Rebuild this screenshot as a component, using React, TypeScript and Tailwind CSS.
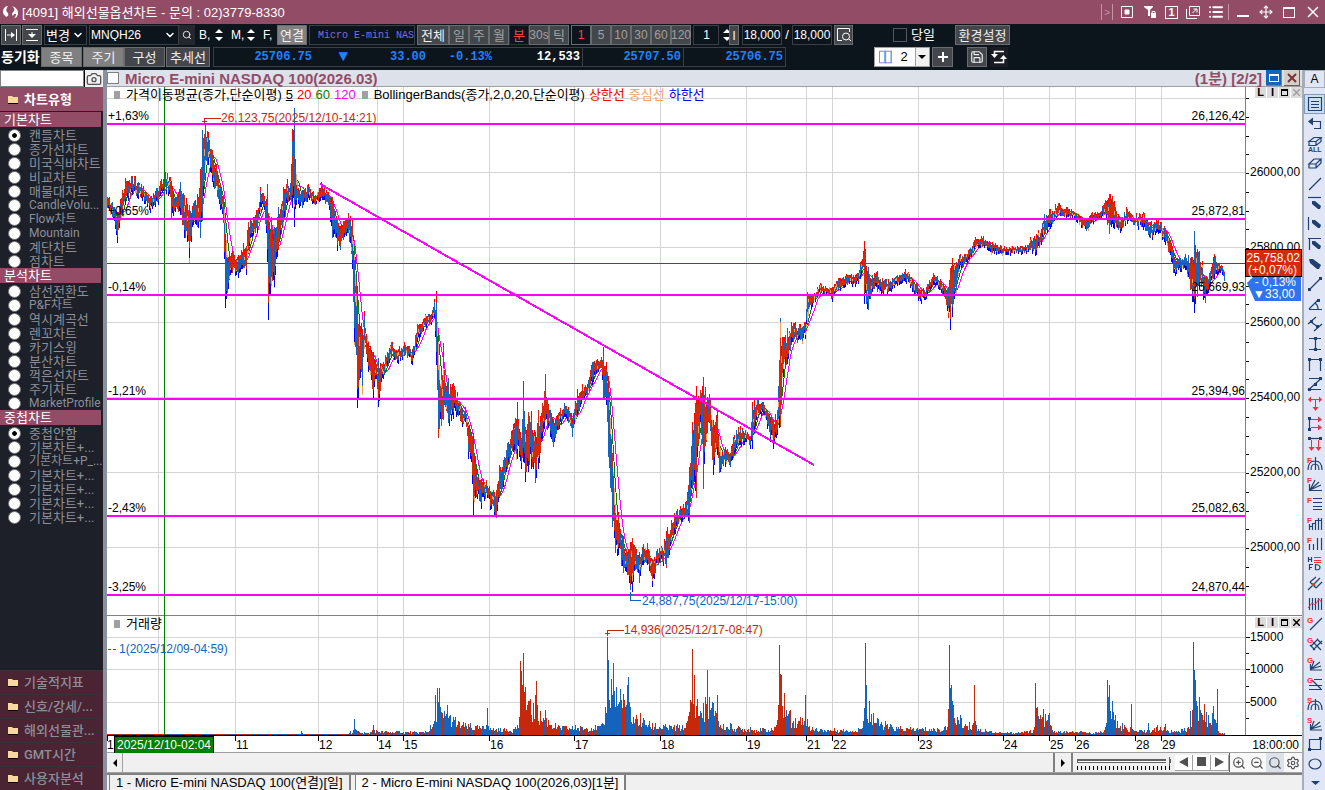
import type { ReactNode } from 'react'
import {
  Camera,
  ChevronDown,
  List,
  Move,
  Save,
  Search,
  Settings,
  ZoomIn,
  ZoomOut,
} from 'lucide-react'
import { twMerge } from 'tailwind-merge'

const noise = (n: number) => {
  const v = Math.sin(n * 12.9898) * 43758.5453
  return v - Math.floor(v)
}

// [x, high, low] in chart units
const PRICE_RANGE: [number, number, number][] = [
  [107, 197, 208], [112, 202, 217], [117, 213, 241], [122, 190, 212], [125, 179, 203], [132, 176, 193],
  [138, 182, 197], [145, 192, 202], [150, 197, 211], [157, 188, 202], [165, 172, 187], [170, 178, 197],
  [171, 182, 220], [175, 200, 210], [180, 182, 213], [184, 195, 236], [189, 205, 256], [193, 203, 223],
  [197, 195, 227], [200, 170, 238], [202, 130, 221], [205, 125, 160], [208, 133, 163], [212, 150, 180],
  [217, 173, 197], [223, 195, 223], [225, 235, 306], [228, 258, 287], [232, 252, 273], [238, 256, 276],
  [243, 244, 268], [246, 246, 273], [248, 222, 250], [253, 218, 233], [257, 210, 231], [260, 188, 205],
  [264, 197, 208], [267, 184, 260], [268, 215, 318], [271, 217, 280], [274, 227, 285], [278, 207, 250],
  [283, 187, 227], [287, 180, 203], [290, 183, 200], [292, 130, 206], [294, 108, 225], [296, 186, 203],
  [302, 190, 208], [307, 185, 200], [315, 195, 205], [321, 183, 198], [328, 193, 205], [332, 197, 238],
  [340, 227, 250], [348, 213, 233], [352, 220, 267], [354, 260, 340], [357, 290, 406], [362, 330, 387],
  [364, 312, 340], [368, 343, 370], [373, 353, 397], [376, 365, 377], [378, 358, 405], [383, 362, 377],
  [391, 342, 355], [398, 350, 362], [404, 343, 356], [412, 350, 363], [417, 325, 340], [425, 314, 327],
  [431, 315, 323], [434, 300, 316], [436, 292, 363], [438, 370, 438], [441, 371, 426], [443, 343, 420],
  [445, 383, 407], [448, 378, 423], [453, 383, 417], [457, 393, 413], [462, 410, 425], [465, 407, 420],
  [468, 427, 457], [471, 433, 460], [473, 434, 513], [477, 477, 497], [481, 480, 507], [486, 480, 493],
  [490, 493, 508], [496, 490, 518], [499, 465, 497], [503, 460, 485], [507, 443, 467], [513, 425, 450],
  [517, 403, 457], [521, 440, 467], [523, 382, 460], [525, 427, 480], [528, 412, 470], [531, 412, 467],
  [535, 433, 483], [538, 410, 467], [542, 403, 437], [545, 374, 420], [547, 400, 430], [550, 410, 435],
  [553, 420, 447], [558, 413, 430], [564, 403, 415], [568, 408, 423], [572, 420, 437], [577, 390, 413],
  [582, 385, 400], [587, 385, 395], [592, 362, 383], [597, 360, 373], [601, 357, 368], [603, 348, 398],
  [606, 363, 403], [608, 377, 457], [612, 453, 527], [615, 513, 553], [618, 513, 553], [623, 537, 573],
  [627, 553, 575], [630, 543, 590], [632, 538, 590], [635, 547, 570], [639, 553, 583], [643, 545, 563],
  [647, 543, 563], [652, 560, 585], [657, 550, 563], [662, 548, 562], [666, 532, 568], [671, 520, 543],
  [677, 510, 527], [685, 503, 515], [689, 467, 523], [692, 423, 487], [696, 387, 498], [700, 390, 420],
  [703, 377, 489], [707, 397, 433], [709, 394, 423], [713, 420, 473], [717, 412, 453], [719, 453, 473],
  [725, 448, 465], [730, 453, 467], [733, 438, 458], [740, 427, 443], [745, 430, 440], [750, 437, 447],
  [752, 403, 447], [758, 398, 413], [763, 403, 413], [767, 410, 427], [773, 420, 447], [777, 410, 433],
  [780, 318, 427], [783, 337, 375], [787, 328, 362], [793, 323, 342], [800, 325, 340], [805, 322, 337],
  [807, 292, 312], [812, 295, 305], [821, 284, 291], [827, 288, 296], [832, 288, 300], [838, 278, 290],
  [847, 275, 285], [855, 276, 285], [860, 263, 277], [863, 252, 267], [864, 242, 302], [868, 267, 310],
  [872, 275, 290], [877, 272, 292], [882, 278, 293], [888, 280, 292], [897, 275, 284], [905, 270, 280],
  [913, 280, 292], [921, 290, 302], [926, 288, 297], [933, 273, 283], [940, 280, 290], [944, 287, 297],
  [948, 287, 318], [950, 268, 328], [952, 259, 315], [956, 263, 293], [959, 255, 267], [963, 257, 267],
  [970, 248, 257], [975, 238, 247], [983, 237, 246], [992, 243, 253], [1001, 247, 254], [1012, 247, 253],
  [1022, 246, 252], [1027, 246, 252], [1030, 238, 250], [1036, 235, 253], [1041, 230, 243], [1044, 214, 233],
  [1050, 210, 227], [1058, 203, 213], [1067, 208, 217], [1075, 213, 218], [1082, 218, 228], [1086, 220, 231],
  [1092, 212, 222], [1100, 213, 218], [1105, 200, 213], [1109, 194, 234], [1114, 202, 227], [1118, 215, 230],
  [1127, 209, 222], [1133, 217, 225], [1143, 212, 228], [1150, 223, 238], [1158, 220, 232], [1165, 228, 243],
  [1169, 240, 253], [1173, 253, 273], [1180, 258, 270], [1185, 255, 268], [1190, 258, 290], [1192, 257, 300],
  [1194, 231, 311], [1197, 250, 297], [1199, 252, 287], [1205, 277, 303], [1209, 273, 290], [1214, 255, 277],
  [1218, 263, 272], [1222, 266, 273], [1224, 272, 281],
]

// [x, height] envelope of the volume bars
const VOLUME: [number, number][] = [
  [107, 1], [300, 1], [301, 4], [304, 1], [348, 1], [350, 4], [353, 5], [354, 16], [355, 6], [364, 3], [370, 3],
  [373, 10], [376, 5], [425, 4], [430, 10], [434, 14], [435, 40], [437, 47], [439, 47], [440, 28], [447, 30], [455, 18],
  [470, 12], [486, 10], [487, 27], [488, 9], [515, 8], [519, 18], [520, 74], [523, 82], [525, 48], [530, 36],
  [535, 40], [536, 54], [537, 30], [545, 25], [555, 12], [575, 10], [602, 12], [605, 28], [607, 98], [608, 75],
  [613, 72], [616, 48], [620, 46], [627, 50], [628, 58], [630, 28], [640, 22], [655, 12], [686, 12], [690, 35],
  [692, 86], [694, 60], [697, 36], [705, 38], [707, 65], [709, 38], [717, 40], [718, 14], [730, 12], [750, 8],
  [774, 8], [778, 30], [779, 90], [781, 60], [784, 42], [790, 25], [800, 18], [805, 40], [807, 16], [812, 8],
  [858, 7], [863, 14], [865, 92], [866, 50], [869, 34], [873, 22], [885, 14], [900, 9], [945, 9], [948, 26],
  [949, 90], [951, 50], [953, 30], [960, 20], [973, 12], [974, 50], [976, 10], [985, 6], [1000, 3], [1030, 5],
  [1034, 8], [1035, 52], [1037, 28], [1043, 26], [1048, 20], [1049, 22], [1052, 5], [1080, 4], [1100, 4],
  [1106, 12], [1107, 55], [1109, 50], [1112, 34], [1115, 20], [1122, 12], [1130, 8], [1131, 31], [1132, 6],
  [1147, 5], [1148, 12], [1149, 5], [1157, 10], [1165, 11], [1167, 5], [1188, 8], [1190, 24], [1192, 25],
  [1193, 93], [1195, 55], [1199, 38], [1201, 22], [1204, 31], [1208, 20], [1213, 29], [1215, 15], [1217, 46],
  [1218, 4], [1224, 2],
]

// [from, to, share of rising bars]
const VOLUME_TREND: [number, number, number][] = [
  [434, 448, 0.15], [517, 548, 0.75], [602, 632, 0.15], [688, 698, 0.9], [699, 720, 0.35], [776, 800, 0.7],
  [858, 875, 0.15], [945, 957, 0.6], [1034, 1036, 1], [1106, 1115, 0.2], [1194, 1205, 0.4],
]

const GRID_X = [158, 235, 318, 377, 403, 489, 574, 660, 746, 806, 832, 918, 1003, 1049, 1075, 1135, 1161]
const GRID_Y = [98, 172, 247, 322, 397, 472, 547, 637, 669, 702]
const DATES: [number, string][] = [
  [106, '1'], [235, '11'], [318, '12'], [377, '14'], [403, '15'], [489, '16'], [574, '17'], [660, '18'], [746, '19'],
  [806, '21'], [832, '22'], [918, '23'], [1003, '24'], [1049, '25'], [1075, '26'], [1135, '28'], [1161, '29'],
]
const LEVELS = [
  { y: 124, percent: '+1,63%', price: '26,126,42' },
  { y: 219, percent: '+0,65%', price: '25,872,81' },
  { y: 295, percent: '-0,14%', price: '25,669,93' },
  { y: 399, percent: '-1,21%', price: '25,394,96' },
  { y: 516, percent: '-2,43%', price: '25,082,63' },
  { y: 595, percent: '-3,25%', price: '24,870,44' },
]
const AXIS: [number, string][] = [
  [172, '26000,00'], [247, '25800,00'], [322, '25600,00'], [397, '25400,00'], [472, '25200,00'], [547, '25000,00'],
  [637, '15000'], [669, '10000'], [702, '5000'],
]

function interpolate(points: number[][], x: number, column: number) {
  const i = points.findIndex((p) => p[0] >= x)
  if (i <= 0) return points[Math.max(i, 0)][column]
  const a = points[i - 1]
  const b = points[i]
  return a[column] + ((b[column] - a[column]) * (x - a[0])) / (b[0] - a[0])
}

function buildPrice() {
  const paths = { up: '', down: '', top: '', bottom: '', middle: '' }
  const mids: [number, number][] = []
  for (let x = 107; x <= 1224; x++) {
    const anchor = PRICE_RANGE.some((p) => p[0] === x)
    const hi = interpolate(PRICE_RANGE, x, 1)
    const lo = interpolate(PRICE_RANGE, x, 2)
    const half = (lo - hi) / 2
    const mid = (hi + lo) / 2
    mids.push([x, mid])
    const shift = anchor ? 0 : (noise(x + 50) - 0.5) * Math.min(8, half)
    const top = Math.round(mid + shift - half * (anchor ? 1 : 0.45 + noise(x) * 0.5))
    const bottom = Math.round(mid + shift + half * (anchor ? 1 : 0.45 + noise(x + 900) * 0.5))
    const px = x + 0.5
    const split = Math.round(top + (bottom - top) * noise(x + 400))
    const first = noise(x * 3) > 0.45
    paths[first ? 'up' : 'down'] += `M${px} ${top}V${split}`
    paths[first === noise(x * 7) > 0.4 ? 'down' : 'up'] += `M${px} ${split}V${bottom}`
    const cap = Math.max(1, Math.round((bottom - top) * 0.15))
    if (noise(x + 77) > 0.5) paths.top += `M${px} ${top - 1}v${cap + 1}`
    if (noise(x + 177) > 0.5) paths.bottom += `M${px} ${bottom - cap}v${cap + 2}`
    if (noise(x + 277) > 0.75) paths.middle += `M${px} ${split}v${Math.max(3, cap)}`
  }
  const average = (span: number) =>
    mids
      .map(([x], i) => {
        const part = mids.slice(Math.max(0, i - span + 1), i + 1)
        return `${i ? 'L' : 'M'}${x} ${(part.reduce((sum, p) => sum + p[1], 0) / part.length).toFixed(1)}`
      })
      .join('')
  return { ...paths, short: average(4), medium: average(8), long: average(13) }
}

function buildVolume() {
  let up = ''
  let down = ''
  for (let x = 107; x <= 1224; x++) {
    const anchor = VOLUME.some((p) => p[0] === x)
    const h = Math.max(1, Math.round(interpolate(VOLUME, x, 1) * (anchor ? 1 : 0.3 + noise(x + 31) * 0.6)))
    const bar = `M${x + 0.5} 735v-${h}`
    const share = VOLUME_TREND.find(([from, to]) => x >= from && x <= to)?.[2] ?? 0.5
    if (noise(Math.floor(x / 2) + 5) < share) up += bar
    else down += bar
  }
  return { up, down }
}

const price = buildPrice()
const volume = buildVolume()

function PaneButtons({ disabled }: { disabled?: boolean }) {
  return (
    <div className="flex gap-px">
      {['L', 'I', 'Maximize', 'Close'].map((name) => (
        <button
          key={name}
          type="button"
          aria-label={name}
          className="flex size-[11px] items-center justify-center bg-[#dcdcdc] text-[11px] leading-none font-bold text-black"
        >
          {name === 'Maximize' && <span className="h-[7px] w-[7px] border border-t-2 border-black" />}
          {name === 'Close' && (
            <svg viewBox="0 0 7 7" className="size-[7px]" stroke={disabled ? '#a0a0a0' : '#000'} strokeWidth="1.500">
              <path d="M0 0l7 7M7 0L0 7" />
            </svg>
          )}
          {name.length === 1 && name}
        </button>
      ))}
    </div>
  )
}

function Chart() {
  return (
    <div className="relative min-h-0 flex-1 bg-white">
      <svg viewBox="107 87 1195 666" className="block h-full w-full text-[12px]" fill="none">
        <g shapeRendering="crispEdges">
          <path d={GRID_X.map((x) => `M${x + 0.5} 87V735`).join('')} stroke="#d4d4d4" />
          <path d={GRID_Y.map((y) => `M107 ${y + 0.5}H1245`).join('')} stroke="#d4d4d4" />
          <path d="M107 615.5H1302" stroke="#808080" />
          <path d={price.long} stroke="#f0f" />
          <path d={price.medium} stroke="#008000" />
          <path d={price.short} stroke="#f4a460" strokeWidth="2" />
          <path d={price.up} stroke="#d42a0a" />
          <path d={price.down} stroke="#1464be" />
          <path d={price.middle} stroke="#f4a460" />
          <path d={price.top} stroke="#f00" />
          <path d={price.bottom} stroke="#00f" />
          <path d={volume.up} stroke="#c8280a" />
          <path d={volume.down} stroke="#1464be" />
          <path d="M107 263.5H1245M164.5 87V735" stroke="#008000" />
          <path d={LEVELS.map(({ y }) => `M107 ${y}H1245`).join('')} stroke="#f0f" strokeWidth="2" />
          <path d="M320 184L814 465" stroke="#f0f" strokeWidth="2" />
          <path d="M1245.5 87V735" stroke="#808080" />
          <path d="M107 735.5H1302" stroke="#000" />
          <path d={GRID_X.map((x) => `M${x + 0.5} 736v5`).join('')} stroke="#000" />
          <path d="M107.5 736v5" stroke="#000" />
          <path d="M107 752.5H1302" stroke="#a0a0a0" />
          <path
            d={[...Array(27)].map((_, i) => `M1246 ${Math.round(98 + i * 18.75) + 0.5}h3`).join('')}
            stroke="#000"
          />
          <path d="M1246 637.5h4M1246 653.5h3M1246 669.5h4M1246 686.5h3M1246 702.5h4M1246 718.5h3" stroke="#000" />
          <path d="M204.5 124v-5.5H221M202 121.5h5M607.5 636v-5.5H624M605 633.5h5" stroke="#c8280a" />
          <path d="M630.5 592v8.5H641M628 594.5h5M108 649.5h3M113 649.5h3" stroke="#1464be" />
        </g>
        <g fill="#000">
          {LEVELS.map(({ y, percent, price: value }) => (
            <g key={y}>
              <text x="108" y={y - 4}>{percent}</text>
              <text x="1245" y={y - 4} textAnchor="end">{value}</text>
            </g>
          ))}
          {AXIS.map(([y, label]) => (
            <text key={label} x="1250" y={y + 4}>{label}</text>
          ))}
          {DATES.map(([x, label]) => (
            <text key={x} x={x + 1} y="749">{label}</text>
          ))}
          <text x="1299" y="749" textAnchor="end">18:00:00</text>
          <text x="221" y="122" fill="#c8280a">26,123,75(2025/12/10-14:21)</text>
          <text x="624" y="634" fill="#c8280a">14,936(2025/12/17-08:47)</text>
          <text x="642" y="605" fill="#1464be">24,887,75(2025/12/17-15:00)</text>
          <text x="119" y="653" fill="#1464be">1(2025/12/09-04:59)</text>
          <rect x="114.5" y="736.5" width="99" height="18" fill="#008000" stroke="#000" />
          <text x="164" y="749" fill="#fff" textAnchor="middle">2025/12/10-02:04</text>
          <path d="M1247 283l8-8h46v26h-46z" fill="#2f74ee" />
          <text x="1296" y="286" fill="#fff" textAnchor="end">- 0,13%</text>
          <text x="1295" y="298" fill="#fff" textAnchor="end">▼33,00</text>
          <rect x="1245.5" y="249.5" width="56" height="27" fill="#d42a0a" stroke="#000" />
          <text x="1300" y="262" fill="#fff" textAnchor="end">25,758,02</text>
          <text x="1297" y="274" fill="#fff" textAnchor="end">(+0,07%)</text>
        </g>
      </svg>
      <div className="absolute top-0 left-[7px] flex items-center gap-1 text-[13px] leading-4">
        <span className="mr-0.5 h-2 w-1.5 bg-[#a0a0a0]" />
        <span>가격이동평균(종가,단순이평)</span>
        <span className="underline">5</span>
        <span className="text-[#f00]">20</span>
        <span className="text-[#008000]">60</span>
        <span className="text-[#f0f]">120</span>
        <span className="mx-0.5 h-2 w-1.5 bg-[#a0a0a0]" />
        <span>BollingerBands(종가,2,0,20,단순이평)</span>
        <span className="text-[#f00]">상한선</span>
        <span className="text-[#f4a460]">중심선</span>
        <span className="text-[#00f]">하한선</span>
      </div>
      <div className="absolute top-[79.4%] left-[7px] flex items-center gap-1.5 text-[13px] leading-4">
        <span className="h-2 w-1.5 bg-[#a0a0a0]" />
        <span>거래량</span>
      </div>
      <div className="absolute top-0 right-0">
        <PaneButtons disabled />
      </div>
      <div className="absolute top-[79.6%] right-0">
        <PaneButtons />
      </div>
    </div>
  )
}

type ToolButtonProps = {
  children: ReactNode
  className?: string
  label?: string
}

function ToolButton({ children, className, label }: ToolButtonProps) {
  return (
    <button
      type="button"
      aria-label={label}
      className={twMerge(
        'flex h-5 w-5 shrink-0 items-center justify-center border border-[#6a6d70] bg-[#43474b] text-[13px] leading-none text-[#f0f0f0]',
        className,
      )}
    >
      {children}
    </button>
  )
}

function Spinner() {
  return (
    <div className="flex w-4 shrink-0 flex-col items-center justify-center gap-1">
      <button type="button" aria-label="Increase" className="border-x-4 border-b-4 border-x-transparent border-b-white" />
      <button type="button" aria-label="Decrease" className="border-x-4 border-t-4 border-x-transparent border-t-white" />
    </div>
  )
}

function Dropdown({ label, value, className }: { label: string; value: string; className: string }) {
  return (
    <div className={`relative flex h-5 shrink-0 items-center border border-[#3c3e44] ${className}`}>
      <select aria-label={label} className="w-full appearance-none bg-transparent pl-px leading-none text-white">
        <option>{value}</option>
      </select>
      <ChevronDown className="pointer-events-none absolute right-0.5 size-3" strokeWidth={3} />
    </div>
  )
}

const fieldClass = 'h-5 border border-[#3c3e44] bg-transparent text-[12px] text-white'

function TitleBar() {
  return (
    <header className="flex h-6 shrink-0 items-center bg-[#934c66] text-white">
      <svg viewBox="0 0 16 12" className="ml-0.5 h-3 w-4 fill-white">
        <path d="M6 0C3 0 1 3 1 6c0 3 2 3 3 5 3-1 3-3 1-5C4 5 4 2 6 0zM10 0c2 2 3 3 2 5-1 1-3 3-1 5l1-2h2c0 2-1 3-2 4 3 0 4-3 4-5 0-4-3-6-6-7z" />
      </svg>
      <h1 className="ml-1 text-[13px] leading-none">[4091] 해외선물옵션차트 - 문의 : 02)3779-8330</h1>
      <div className="ml-auto flex h-4 items-center gap-2 pr-1.5">
        <span className="flex h-4 items-center border-x border-[#c295a5] px-0.5 text-[10px] text-[#c295a5]">&gt;</span>
        <svg viewBox="0 0 12 12" className="size-3" fill="none" stroke="#fff">
          <path d="M.5.5h11v11H.5z" />
          <path d="M4 4h4v4H4z" fill="#fff" />
        </svg>
        <svg viewBox="0 0 14 14" className="ml-0.5 h-3.5 w-3.5 fill-white">
          <path d="M1 1h9v1L7 5v6H5V5L1 2z" />
          <path d="M8 8h5v5H8z" />
          <path d="M9 8V6.5h3V8" fill="none" stroke="#fff" />
        </svg>
        <span className="flex h-[13px] w-[13px] items-center justify-center border border-white text-[11px] leading-none font-bold">1</span>
        <svg viewBox="0 0 14 13" className="h-[13px] w-3.5" fill="none" stroke="#fff">
          <path d="M3.5.5h10v9h-10zM.5 3v9.5H11M6.500 7l4-4M7.500 3H11v3.500" />
        </svg>
        <List className="size-4" strokeWidth={3} />
        <span className="-ml-1 h-4 w-px bg-[#c295a5]" />
        <span className="mt-2 h-0.5 w-3 bg-white" />
        <Move className="ml-0.5 size-3.5" />
        <span className="ml-0.5 h-[11px] w-3 border border-t-2 border-white" />
        <svg viewBox="0 0 12 12" className="ml-1 size-3" stroke="#fff" strokeWidth="1.500">
          <path d="M1 1l10 10M11 1L1 11" />
        </svg>
      </div>
    </header>
  )
}

function Toolbar() {
  return (
    <div className="flex h-[46px] shrink-0 flex-col gap-0.5 bg-[#0d151c] pt-px text-[13px] text-white">
      <div className="flex h-5 items-center pl-px">
        <ToolButton label="Fit width">
          <svg viewBox="0 0 14 12" className="h-3 w-3.5" fill="none" stroke="#fff">
            <path d="M1.5 0v12M12.5 0v12M3 6h5" />
            <path d="M7 3l4 3-4 3z" fill="#fff" stroke="none" />
          </svg>
        </ToolButton>
        <ToolButton label="Fit height" className="ml-px">
          <svg viewBox="0 0 14 12" className="h-3 w-3.5" fill="none" stroke="#fff">
            <path d="M1 .5h12M1 11.500h12M7 3v3" />
            <path d="M3 5h8L7 9z" fill="#fff" stroke="none" />
          </svg>
        </ToolButton>
        <Dropdown label="변경" value="변경" className="ml-0.5 w-[43px]" />
        <Dropdown label="Symbol" value="MNQH26" className="ml-0.5 w-[90px] text-[12px]" />
        <button type="button" aria-label="Search" className="flex h-5 w-4 items-center justify-center bg-[#24272e]">
          <Search className="size-2.5" />
        </button>
        {['B', 'M', 'F'].map((name) => (
          <div key={name} className="flex h-5">
            <button type="button" className="w-4 pl-1 text-left text-[12px]">
              {name},
            </button>
            {name !== 'F' && <Spinner />}
          </div>
        ))}
        <ToolButton className="ml-0.5 w-[30px] bg-[#808080]">연결</ToolButton>
        <span className="ml-0.5 flex h-5 w-[106px] items-center overflow-hidden border border-[#3c3e44] pl-2 font-['Liberation_Mono',monospace] text-[10px] whitespace-pre text-[#7a6ee0]">
          Micro E-mini NAS
        </span>
        <ToolButton className="ml-0.5 w-8">전체</ToolButton>
        {['일', '주', '월', '분', '30s', '틱'].map((name) => (
          <ToolButton
            key={name}
            className={name === '분' ? 'border-[#303236] bg-[#0d151c] text-[#ff4040]' : 'text-[#a0a0a0]'}
          >
            {name === '30s' ? <span className="text-[12px]">30s</span> : name}
          </ToolButton>
        ))}
        <span className="w-0.5" />
        {['1', '5', '10', '30', '60', '120'].map((name) => (
          <ToolButton
            key={name}
            className={
              name === '1'
                ? 'border-[#6a6d70] bg-[#0d151c] text-[12px] text-[#ff4040]'
                : 'text-[12px] text-[#a0a0a0]'
            }
          >
            {name}
          </ToolButton>
        ))}
        <input aria-label="Interval" defaultValue="1" className={`${fieldClass} ml-0.5 w-[26px] pr-2 text-right`} />
        <Spinner />
        <ToolButton className="-ml-1.5 w-2.5">I</ToolButton>
        <input aria-label="Visible bars" defaultValue="18,000" className={`${fieldClass} ml-[3px] w-10 text-center`} />
        <span className="w-2.5 text-center">/</span>
        <input aria-label="Total bars" defaultValue="18,000" className={`${fieldClass} w-10 text-center`} />
        <ToolButton label="Find" className="ml-0.5 w-[19px]">
          <svg viewBox="0 0 14 14" className="size-3.5" fill="none" stroke="#fff">
            <path d="M5 12.500H.5v-12h12V4M12 11l2 2" />
            <circle cx="9" cy="8.500" r="3.500" />
          </svg>
        </ToolButton>
        <label className="ml-10 flex items-center gap-1">
          <input type="checkbox" className="size-3.5 appearance-none border border-[#55575c]" />
          당일
        </label>
        <ToolButton className="ml-5 w-[55px]">환경설정</ToolButton>
      </div>
      <div className="flex h-5 items-center">
        <span className="w-10 pl-px text-[14px] leading-none font-bold">동기화</span>
        <ToolButton className="ml-px w-[41px] bg-[#808080]">종목</ToolButton>
        <ToolButton className="ml-px w-[41px] bg-[#808080]">주기</ToolButton>
        <ToolButton className="w-[41px]">구성</ToolButton>
        <ToolButton className="ml-px w-11">추세선</ToolButton>
        <div className="ml-[3px] grid h-5 grid-cols-[98px_36px_78px_66px_91px_101px_101px] items-center border border-[#3c3e44] text-right font-['Liberation_Mono',monospace] text-[12px] leading-none font-bold text-[#1e82ff]">
          <span>25706.75</span>
          <span className="text-[16px]">▼</span>
          <span>33.00</span>
          <span>-0.13%</span>
          <span className="flex h-full items-center justify-end border-r border-[#3c3e44] pr-0.5 text-white">12,533</span>
          <span className="flex h-full items-center justify-end border-r border-[#3c3e44] pr-0.5">25707.50</span>
          <span className="pr-0.5">25706.75</span>
        </div>
        <div className="relative ml-[88px] flex h-5 w-14 items-center border border-[#a0a0a0] bg-white text-black">
          <svg viewBox="0 0 15 14" className="ml-1 h-3.5 w-[15px]" fill="none" stroke="#7a6ee0">
            <path d="M.5.5h14v13H.5zM7.5 0v14" />
            <path d="M13.5 1v12M6.5 1v12" stroke="#2f8ae0" />
          </svg>
          <select aria-label="Layout" className="ml-1 w-5 appearance-none pl-1 text-[13px]">
            <option>2</option>
          </select>
          <span className="pointer-events-none ml-auto flex h-full w-4 items-center justify-center border-l border-[#a0a0a0] bg-[#f0f0f0]">
            <span className="border-x-4 border-t-4 border-x-transparent border-t-black" />
          </span>
        </div>
        <ToolButton label="Add" className="ml-0.5 w-[21px]">
          <svg viewBox="0 0 12 12" className="size-3" stroke="#fff" strokeWidth="2">
            <path d="M6 1v10M1 6h10" />
          </svg>
        </ToolButton>
        <ToolButton label="Save" className="ml-3.5"><Save className="size-3.5" /></ToolButton>
        <button type="button" aria-label="Swap" className="ml-[3px] flex h-5 w-[18px] items-center justify-center bg-[#181a24]">
          <svg viewBox="0 0 16 14" className="h-3.5 w-4" fill="none" stroke="#fff">
            <path d="M3.500 5V1.500H13M12.500 9v3.500H3" strokeWidth="1.500" />
            <path d="M0 4h7L3.500 8zM9 9h7l-3.500-4z" fill="#fff" stroke="none" />
          </svg>
        </button>
      </div>
    </div>
  )
}

const CHART_GROUPS = [
  {
    title: '기본차트',
    items: ['캔들차트', '종가선차트', '미국식바차트', '비교차트', '매물대차트', 'CandleVolu...', 'Flow차트', 'Mountain', '계단차트', '점차트'],
  },
  {
    title: '분석차트',
    items: ['삼선전환도', 'P&F차트', '역시계곡선', '렌꼬차트', '카기스윙', '분산차트', '꺽은선차트', '주기차트', 'MarketProfile'],
  },
  {
    title: '중첩차트',
    items: ['중첩안함', '기본차트+...', '기본차트+P_...', '기본차트+...', '기본차트+...', '기본차트+...', '기본차트+...'],
  },
]

function Folder() {
  return (
    <svg viewBox="0 0 10 9" className="h-[9px] w-2.5 shrink-0">
      <path d="M0 1h4l1 1h5v6H0z" fill="#f7d9a0" />
      <path d="M0 8.500h10" stroke="#000" />
    </svg>
  )
}

function Sidebar() {
  return (
    <aside className="flex w-[103px] shrink-0 flex-col bg-[#1d1f29] font-['Roboto','Noto_Sans_CJK_KR',sans-serif] text-[13px] text-[#8c8f98]">
      <div className="flex h-[17px] bg-[#f0f0f0]">
        <input aria-label="Search chart" className="w-[84px] border border-[#808080] bg-white" />
        <button type="button" aria-label="Capture" className="flex flex-1 items-center justify-center border-l border-black text-[#555]">
          <Camera className="size-4" />
        </button>
      </div>
      <button type="button" className="mb-px flex h-6 items-center gap-1.5 bg-[#934c66] pl-2 leading-none font-bold text-white">
        <Folder />
        차트유형
      </button>
      {CHART_GROUPS.map((group) => (
        <fieldset key={group.title} className="flex flex-col">
          <legend className="mb-px flex h-[15px] w-[101px] items-center bg-[#934c66] pl-1 leading-none text-white">{group.title}</legend>
          {group.items.map((item, i) => (
            <label
              key={i}
              className={`flex h-3.5 items-center gap-2 pl-2 leading-none whitespace-nowrap ${/[A-Z]/.test(item) ? 'text-[12px]' : ''}`}
            >
              <input
                type="radio"
                name={group.title}
                defaultChecked={i === 0 && group.title !== '분석차트'}
                className="size-[13px] shrink-0 appearance-none rounded-full border border-[#707070] bg-white checked:bg-[radial-gradient(circle,#000_25%,#fff_35%)]"
              />
              {item}
            </label>
          ))}
        </fieldset>
      ))}
      <nav className="mt-auto flex flex-col">
        {['기술적지표', '신호/강세/...', '해외선물관...', 'GMT시간', '사용자분석'].map((name) => (
          <button
            key={name}
            type="button"
            className="flex h-6 items-center gap-1.5 border-t border-[#3a3038] bg-[#4a2433] pl-2 leading-none font-medium whitespace-nowrap"
          >
            <Folder />
            {name}
          </button>
        ))}
      </nav>
    </aside>
  )
}

type Tool = {
  name: string
  navy?: string
  red?: string
  dots?: string
  redDots?: string
  tag?: string
}

const TOOLS: Tool[] = [
  { name: 'List', navy: 'M1.5 1.5h13v13h-13zM4 5.5h8M4 8.5h8M4 11.5h8' },
  { name: 'Undo', navy: 'M4 5.5h9.500v7H7', dots: 'M1 5.5l5-4v8z' },
  { name: 'Erase all', navy: 'M2 5.5l5-4h7l-5 4zM2 5.5v4h7l5-4v-4M9 5.5v4' },
  { name: 'Erase', navy: 'M2 8l5-5h7l-5 5zM2 8v4h7l5-5V3M9 8v4' },
  { name: 'Line', navy: 'M2 14L14 2' },
  { name: 'Horizontal line', navy: 'M1 1.5h13', dots: 'M5 5h3l6 5-1 3h-2L5 8z' },
  { name: 'Vertical line', navy: 'M1.5 1v13', dots: 'M5 4h3l6 5-1 3h-2L5 7z' },
  { name: 'Cross line', navy: 'M1 2.5h13M2.5 2v12', dots: 'M5 5h3l6 5-1 3h-2L5 8z' },
  { name: 'Pencil', dots: 'M2 3h4l8 6-2 4h-2L3 7z' },
  { name: 'Segment', navy: 'M3 13L13 3', dots: 'M1 12h3v3H1zM12 1h3v3h-3z' },
  { name: 'Angle', navy: 'M2 13.5h13M2 13L11 4M8 7q3 2 3 6', dots: 'M10 3h3v3h-3z' },
  { name: 'Parallel', navy: 'M1 8l8-7M7 15l8-7M4 6l7 5', dots: 'M3 4h3v3H3zM9 9h3v3H9z' },
  { name: 'Height', navy: 'M2 2.5h12M2 13.5h12M8.5 3v11', dots: 'M7 1h3v3H7zM7 12h3v3H7z' },
  { name: 'Width', navy: 'M2.5 3v12M13.5 3v12M2 3.5h12', dots: 'M1 2h3v3H1zM12 2h3v3h-3z' },
  { name: 'Zigzag', navy: 'M2 2.5h12L2 13.5h12', dots: 'M12 1h3v3h-3zM7 7h3v3H7zM1 12h3v3H1z' },
  { name: 'Extend T', red: 'M2 3.5h12M8.5 4v8', redDots: 'M1 3.5l3-3v6zM15 3.5l-3-3v6zM8.5 15l-3-4h6z' },
  { name: 'Extend right', navy: 'M2.5 3v11', dots: 'M1 1h3v3H1zM1 12h3v3H1z', red: 'M4 3.5h8M4 11.5h8', redDots: 'M15 3.5l-4-3v6zM15 11.5l-4-3v6z' },
  { name: 'Extend down', navy: 'M2 2.5h12', dots: 'M1 1h3v3H1zM12 1h3v3h-3z', red: 'M4.5 4v8M11.5 4v8', redDots: 'M4.5 15l-3-4h6zM11.5 15l-3-4h6z' },
  { name: 'Fibonacci arc', tag: 'F', navy: 'M1 14q0-9 7-9t7 9M4 14q0-6 4-6t4 6M8.5 1v13' },
  { name: 'Fibonacci fan', tag: 'F', navy: 'M2.5 8v6.5H15M3 14L8 4M3 14l9-8M3 14l11-5' },
  { name: 'Fibonacci retracement', tag: 'F', navy: 'M6 2.5h9M6 6.5h9M6 10.5h9M6 13.5h9' },
  { name: 'Fibonacci box', tag: 'F', navy: 'M2.5 8v6M5.5 7v7M2 10.5h4M8.5 4v10M5 7.5h4M11.5 2v12M8 4.5h6M14.5 2v12' },
  { name: 'Fibonacci time', tag: 'F', navy: 'M2.5 8v6M6.5 8v6M10.5 2v12M14.5 2v12' },
  { name: 'Fibonacci distance', navy: 'M1.5 1v5M4.5 1v5M1 3.5h3M2 8.5h4M2.5 8v6M2 11.5h3M8.5 8v6M8 8.5q5 0 5 3t-5 2', red: 'M7 1.5h7M7 4.5h7M7 6.5h7' },
  { name: 'Pitchfork', navy: 'M1 14L7 8M3 6l6-5M7 8l6-6M9 12l6-6M3 6l6 6', redDots: 'M5 7h3v3H5z' },
  { name: 'Bars', navy: 'M2.5 2v12M5.5 2v12M8.5 2v12M11.5 2v12M14.5 2v12', red: 'M1 12l4-5 3 2 4-6 3 4' },
  { name: 'Gann line', tag: 'G', navy: 'M3 14L15 2' },
  { name: 'Gann grid', tag: 'G', navy: 'M6 6l8 8M10 3l5 5M15 5l-9 9M11 3L4 10M3 9l5 5' },
  { name: 'Gann fan', tag: 'G', navy: 'M3.5 8v6H15M4 13l3-8M4 13l9-7M4 13l10-3' },
  { name: 'Gann levels', tag: 'G', navy: 'M7 3.5h8M2 9.5h13M2 13.5h13M5 4l9 9' },
  { name: 'Speed arc', tag: 'S', navy: 'M1 14q0-9 7-9t7 9M4 14q0-6 4-6t4 6M8.5 3v11' },
  { name: 'Speed fan', tag: 'S', navy: 'M3.5 8v6H15M4 13l3-8M4 13l9-7M4 13l10-3' },
  { name: 'Rectangle', navy: 'M2.5 3.5h11v10h-11z', dots: 'M12 1h3v3h-3zM1 12h3v3H1z' },
  { name: 'Ellipse', navy: 'M2 8a6 5 0 1012 0a6 5 0 10-12 0' },
  { name: 'More', dots: 'M4 5h9l-4.500 4z' },
]

function DrawingTools() {
  return (
    <aside className="flex w-[23px] shrink-0 flex-col items-center border-l-2 border-[#a8acb4] bg-[#e0e6f5]">
      <button type="button" className="mb-1.5 h-[18px] w-full shrink-0 border border-[#a8acb4] text-[12px] leading-none">
        A
      </button>
      {TOOLS.map((tool, i) => (
        <button
          key={tool.name}
          type="button"
          aria-label={tool.name}
          className={`flex h-5 w-full shrink-0 items-center justify-center ${i === 0 ? 'border border-[#7f9bc0] bg-[#d0def2]' : ''}`}
        >
          <svg viewBox="0 0 16 16" className="size-4 shrink-0" fill="none">
            <path d={tool.navy} stroke="#1f4070" strokeWidth="1.200" />
            <path d={tool.dots} fill="#1f4070" />
            <path d={tool.red} stroke="#f03040" />
            <path d={tool.redDots} fill="#f03040" />
            {tool.tag && (
              <text x="0" y="7" fontSize="8" fontWeight="bold" fill="#f03040">
                {tool.tag}
              </text>
            )}
            {tool.name === 'Erase all' && (
              <text x="1" y="16" fontSize="7" fontWeight="bold" fill="#1f4070">
                ALL
              </text>
            )}
          </svg>
        </button>
      ))}
    </aside>
  )
}

function BottomBar() {
  return (
    <div className="flex h-5 shrink-0 items-center border-b border-[#a0a0a0] bg-[#f0f0f0]">
      <button type="button" aria-label="Scroll left" className="flex h-full w-4 items-center justify-center border-r border-[#a0a0a0]">
        <span className="border-y-4 border-r-4 border-y-transparent border-r-black" />
      </button>
      <div className="h-full flex-1 border-r-2 border-[#808080]" />
      <button type="button" aria-label="Scroll right" className="flex h-full w-[18px] items-center justify-center border-r-2 border-[#808080]">
        <span className="border-y-4 border-l-4 border-y-transparent border-l-black" />
      </button>
      <div className="flex h-full w-[102px] flex-col justify-between px-1 py-0.5">
        <input
          type="range"
          aria-label="Zoom level"
          defaultValue="100"
          className="mt-1 h-1 w-full appearance-none border border-t-2 border-[#606060] bg-white [&::-webkit-slider-thumb]:h-2.5 [&::-webkit-slider-thumb]:w-1 [&::-webkit-slider-thumb]:appearance-none [&::-webkit-slider-thumb]:border-r [&::-webkit-slider-thumb]:border-[#606060] [&::-webkit-slider-thumb]:bg-[#f0f0f0]"
        />
        <span className="h-1 w-full bg-[repeating-linear-gradient(90deg,#000_0_1px,transparent_1px_4px)]" />
      </div>
      <div className="flex h-full items-center border-r border-[#606060]">
        {[
          ['Previous', 'M9 0v10L0 5z'],
          ['Stop', 'M0 0h9v9H0z'],
          ['Next', 'M0 0v10l9-5z'],
        ].map(([name, d]) => (
          <button key={name} type="button" aria-label={name} className="flex h-4 w-[18px] items-center justify-center border-r border-b border-[#a0a0a0] bg-white">
            <svg viewBox="0 0 10 10" className="size-2.5 fill-[#505050]"><path d={d} /></svg>
          </button>
        ))}
      </div>
      {[ZoomIn, ZoomOut, Search, Settings].map((Icon, i) => (
        <button
          key={i}
          type="button"
          aria-label={['Zoom in', 'Zoom out', 'Zoom area', 'Settings'][i]}
          className={`flex h-full w-[18px] items-center justify-center text-[#505050] ${i === 2 ? 'bg-[#dde2ea]' : 'bg-[#f8f8f8]'}`}
        >
          <Icon className="size-3.5" />
        </button>
      ))}
    </div>
  )
}

export default function App() {
  return (
    <div className="flex h-screen flex-col overflow-hidden bg-[#f0f0f0] font-['Liberation_Sans','Noto_Sans_CJK_KR',sans-serif] text-black">
      <TitleBar />
      <Toolbar />
      <div className="flex min-h-0 flex-1">
        <Sidebar />
        <div className="w-1 shrink-0 bg-[#8791a0]" />
        <main className="flex min-w-0 flex-1 flex-col">
          <div className="flex h-[17px] shrink-0 items-center border-b border-[#a0a0a0] bg-[#dde2ea] text-[15px] leading-none font-bold text-[#934c66]">
            <input type="checkbox" aria-label="Select chart" className="size-3 appearance-none border border-[#808080] bg-white" />
            <h2 className="ml-1.5">Micro E-mini NASDAQ 100(2026.03)</h2>
            <span className="mr-1 ml-auto">(1분) [2/2]</span>
            <button type="button" aria-label="Restore" className="flex h-4 w-4 items-center justify-center border-r border-b border-[#808080] bg-[#1464be]">
              <span className="h-2 w-2.5 border border-t-2 border-white" />
            </button>
            <button type="button" aria-label="Close" className="mx-0.5 flex h-4 w-4 items-center justify-center border-r border-b border-[#606060] bg-[#d4d0c8]">
              <svg viewBox="0 0 10 10" className="size-2.5" stroke="#7a3038" strokeWidth="2"><path d="M1 1l8 8M9 1L1 9" /></svg>
            </button>
          </div>
          <Chart />
          <BottomBar />
          <div className="flex h-[17px] shrink-0 items-end gap-1 border-t-2 border-[#808080] pl-0.5 text-[13px] leading-none">
            <button type="button" className="h-[15px] border-r-2 border-l border-[#808080] px-1.5 whitespace-nowrap">
              1 - Micro E-mini NASDAQ 100(연결)[일]
            </button>
            <button type="button" className="h-[15px] border-r-2 border-l border-[#808080] bg-[#fafafa] px-1.5 whitespace-nowrap">
              2 - Micro E-mini NASDAQ 100(2026,03)[1분]
            </button>
          </div>
        </main>
        <DrawingTools />
      </div>
    </div>
  )
}
